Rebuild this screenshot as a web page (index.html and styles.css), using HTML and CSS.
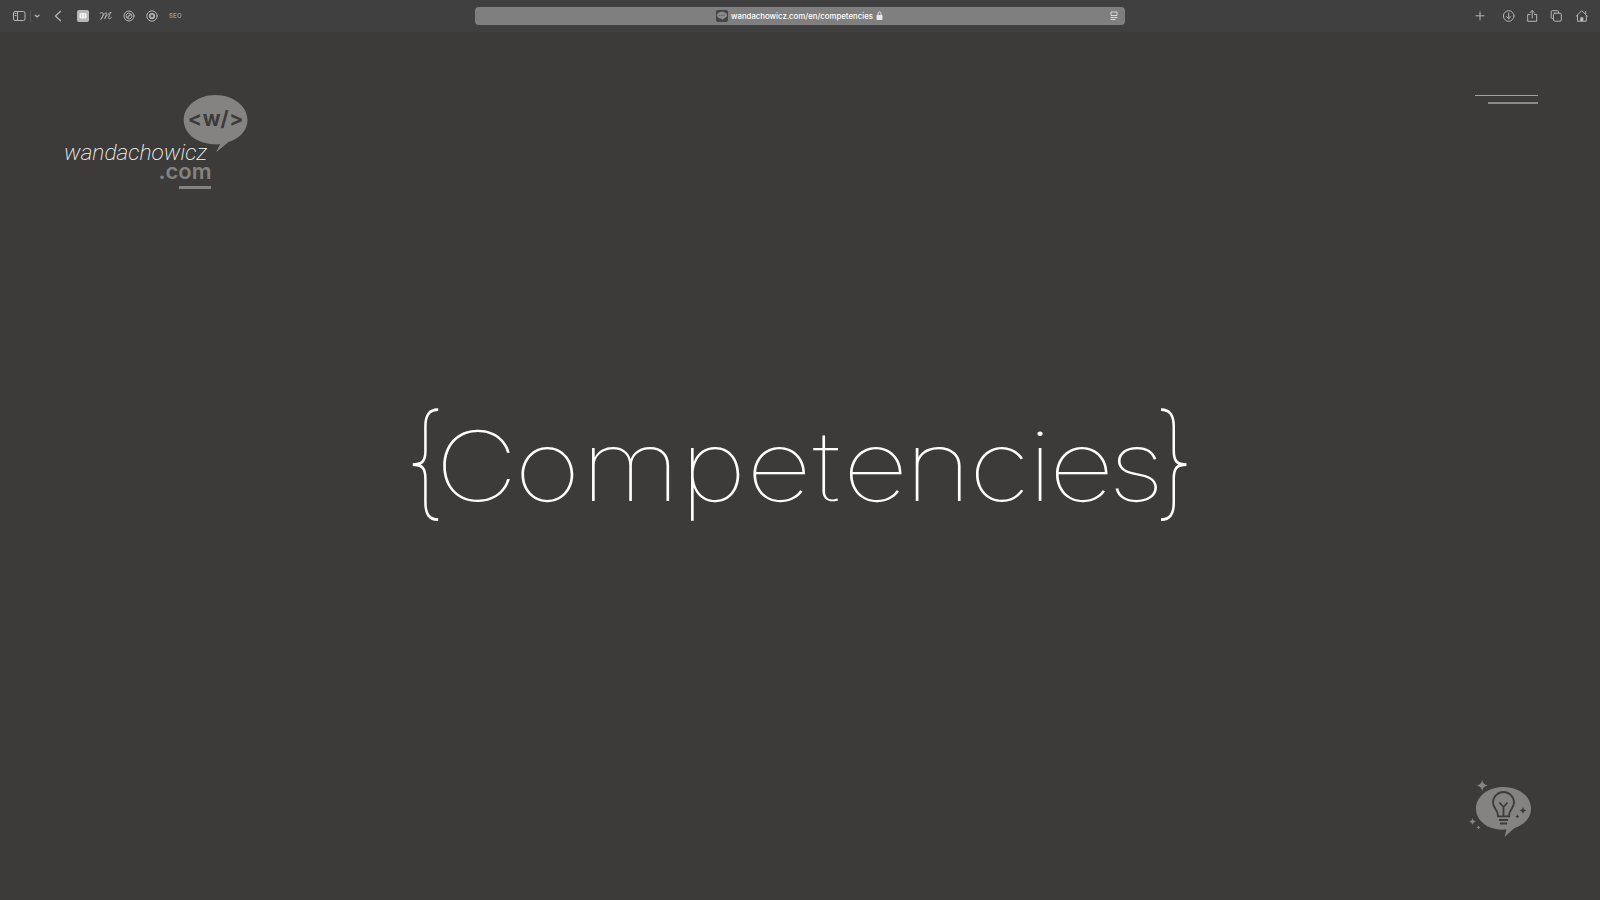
FILE: index.html
```html
<!DOCTYPE html>
<html lang="en">
<head>
<meta charset="utf-8">
<title>Competencies</title>
<link rel="stylesheet" href="styles.css">
</head>
<body>
<header class="toolbar">
  <svg class="tools" width="200" height="32" viewBox="0 0 200 32">
    <g class="line">
      <rect x="13.500" y="11.500" width="11.500" height="9" rx="1.500"/>
      <path d="M17.500 11.500v9M15 13.500h1M15 15.500h1"/>
      <path class="divider" d="M30.500 11v11"/>
      <path class="bold" d="M35.200 15.200l1.900 1.700 1.900-1.700"/>
      <path class="bold" d="M60.500 11.300L55.500 16l5 4.700"/>
      <circle cx="129" cy="16" r="5"/>
      <path d="M126.600 17.500a2.800 2.800 0 0 1 3.800-4zM131.400 14.500a2.800 2.800 0 0 1-3.800 4z"/>
      <circle cx="152" cy="16" r="5.200"/>
      <circle class="thick" cx="152" cy="16" r="2.200"/>
      <path d="M100 13.200c1.200-.8 3-.7 3.200.4.200 1.700-.9 4.200-2.400 5.900 1.400-2.900 3.500-6.300 5.300-6.800 1.200 0-.6 3.500-1.300 6 1.300-2.700 4.400-6 6.300-6.500-1.100 1.600-3.300 5.700-2.200 6.500.9.300 1.800-.7 2.500-1.300"/>
    </g>
    <rect x="77" y="10" width="12" height="12" rx="2" fill="#b8b8b8"/>
    <rect x="79.500" y="13" width="7" height="5.500" rx="1" fill="#f0f0f0"/>
    <path d="M81.500 14v3M84.500 14v3" stroke="#d6d6d6"/>
    <text class="seo" x="169" y="18.300" textLength="12.500">SEO</text>
  </svg>
  <div class="address">
    <svg class="favicon" width="12" height="12" viewBox="0 0 12 12">
      <rect width="12" height="12" rx="2" fill="#454545"/>
      <ellipse cx="6" cy="5.300" rx="5" ry="3.500" fill="#8b8b8b"/>
      <path d="M6 8l.2 2.200L8 8z" fill="#8b8b8b"/>
      <path d="M2.800 5.300h6.400" stroke="#5b5b5b" stroke-dasharray="1.500 .7"/>
    </svg>
    <span class="url">wandachowicz.com/en/competencies</span>
    <svg class="lock" width="7" height="10" viewBox="0 0 7 10">
      <rect x=".5" y="4" width="6" height="5" rx=".8" fill="#e8e8e8"/>
      <path d="M2 4V2.500a1.500 1.500 0 0 1 3 0V4" fill="none" stroke="#e8e8e8"/>
    </svg>
    <svg class="reader" width="8" height="10" viewBox="0 0 8 10">
      <path d="M1 1h6v3.500H1zM.5 6.500h7M.5 8.500h5" fill="none" stroke="#dadada"/>
    </svg>
  </div>
  <svg class="tools" width="150" height="32" viewBox="0 0 150 32">
    <g class="line">
      <path d="M30 11.800v8M26 15.800h8"/>
      <circle cx="58.700" cy="16" r="5.300"/>
      <path d="M58.700 13v5.500M56.500 16.500l2.200 2.200 2.200-2.200"/>
      <path d="M80 14.500h-2.300v6.800h9v-6.800h-2.300M82.200 18v-7.300M80 12.700l2.200-2.200 2.200 2.200"/>
      <path d="M103.500 18.500h-1.300q-1 0-1-1v-5.800q0-1 1-1h5.300q1 0 1 1V13"/>
      <rect x="103.500" y="13.200" width="7.800" height="8" rx="1.200"/>
      <path d="M126.200 16.200l5.600-5.500 5.600 5.500M127.500 15.500v5.700h8.800v-5.700M135.700 13.500v-2"/>
    </g>
    <path d="M130.300 21v-3.700h3V21z" fill="#c0c0c0"/>
  </svg>
</header>
<main class="page">
  <div class="top">
    <svg class="logo" width="190" height="98" viewBox="60 93 190 98" role="img">
      <path class="shape" d="M215.500 95C233 95 247.500 106 247.500 119.800C247.500 130.500 240 138.500 228.500 142L216 152.500L220 144.300C199 145.500 183.700 135 183.700 119.800C183.700 106 198 95 215.500 95Z"/>
      <text class="code" x="194.800 211.800 224.500 236.300" y="126">&lt;w/&gt;</text>
      <text class="name" x="64" y="160" textLength="143" lengthAdjust="spacingAndGlyphs">wandachowicz</text>
      <text class="com" x="158.500" y="179" textLength="53">.com</text>
      <rect class="shape" x="179" y="186" width="32" height="3"/>
    </svg>
    <div class="menu"><i class="bar"></i><i class="bar short"></i></div>
  </div>
  <h1 class="heading">
    <svg width="800" height="200" viewBox="400 360 800 200">
      <text class="brace" transform="translate(425 503.500) scale(1.080 1.240)">{</text>
      <text class="title" transform="translate(0 501) scale(1.180 1)" x="403.800 464 534.300 604.500 660.200 700.500 742 795 847 881.500 916.500 963">Competencies</text>
      <text class="brace" transform="translate(1174 503.500) scale(1.080 1.240)">}</text>
    </svg>
  </h1>
  <svg class="hint" width="66" height="60" viewBox="1468 778 66 60">
    <path class="shape" d="M1503.500 787C1519 787 1531 796.500 1531 808.500C1531 818 1524 825 1514.500 828L1504.500 837L1506.500 829.500C1489 831 1476 821.500 1476 808.500C1476 796.500 1488 787 1503.500 787Z"/>
    <path class="shape" d="M1482.200 780q.8 4.700 5.500 5.500q-4.700.8-5.500 5.500q-.8-4.700-5.500-5.500q4.700-.8 5.500-5.500zM1472.500 818q.5 3 3.500 3.500q-3 .5-3.500 3.500q-.5-3-3.500-3.500q3-.5 3.500-3.500zM1478.500 825.500q.3 1.700 2 2q-1.700.3-2 2q-.3-1.700-2-2q1.700-.3 2-2z"/>
    <path class="ink" d="M1498 815.500C1498 810 1493 808 1493 802.500A10.500 10.500 0 0 1 1514 802.500C1514 808 1509 810 1509 815.500M1499.500 802.500l4 4.500 4-4.500M1503.500 807v8.500M1497 816.300h13M1499 820h9M1500 823.500h7"/>
    <path class="cut" d="M1523 807q.5 3 3.500 3.500q-3 .5-3.500 3.500q-.5-3-3.500-3.500q3-.5 3.500-3.500zM1517.300 814.500q.3 1.700 2 2q-1.700.3-2 2q-.3-1.700-2-2q1.700-.3 2-2z"/>
  </svg>
</main>
</body>
</html>
```
FILE: styles.css
```css
* { box-sizing: border-box; }
body {
  margin: 0;
  width: 1600px;
  height: 900px;
  overflow: hidden;
  display: flex;
  flex-direction: column;
  background: #3c3b39;
  font-family: Inter, "Liberation Sans", sans-serif;
}
svg { display: block; flex: none; }
.toolbar {
  height: 32px;
  display: flex;
  align-items: center;
  background: #404040;
}
.line { fill: none; stroke: #b4b4b4; stroke-width: 1; stroke-linecap: round; stroke-linejoin: round; }
.line .bold { stroke-width: 1.3; }
.line .thick { stroke-width: 1.8; }
.line .divider { stroke: #555; }
.seo { font: 600 6px Inter, sans-serif; fill: #999; }
.address {
  width: 650px;
  height: 18px;
  margin: 0 325px 0 275px;
  flex: none;
  display: flex;
  align-items: center;
  border-radius: 4px;
  background: #7f7f7f;
  padding: 0 7px 0 241px;
}
.url {
  width: 142px;
  margin-left: 3px;
  font-size: 7.800px;
  font-weight: 500;
  line-height: 18px;
  white-space: nowrap;
  color: #fff;
}
.lock { margin-left: 3px; }
.reader { margin-left: auto; }
.page {
  flex: 1;
  display: flex;
  flex-direction: column;
  align-items: center;
  padding: 61px 62px 62px 60px;
}
.top { align-self: stretch; display: flex; justify-content: space-between; }
.menu {
  width: 63px;
  padding-top: 2px;
  display: flex;
  flex-direction: column;
  align-items: flex-end;
  gap: 6px;
}
.bar { width: 63px; height: 1px; background: #a3a29f; }
.short { width: 50px; height: 2px; background: #8a8987; }
.shape { fill: #848381; }
.code { font: 700 21px Inter, sans-serif; fill: #3c3b39; text-anchor: middle; }
.name { font: italic 200 21.5px Roboto, sans-serif; fill: #f5f5f3; }
.com { font: 600 22px Inter, sans-serif; fill: #848381; }
.heading { margin: 169px 0 0 2px; font-weight: 100; }
.title, .brace { font-family: Inter, sans-serif; font-weight: 100; fill: #fff; text-anchor: middle; }
.title { font-size: 97px; }
.brace { font-size: 100px; }
.hint { margin: auto 4px 0 0; align-self: flex-end; }
.ink { fill: none; stroke: #3c3b39; stroke-width: 1.8; }
.cut { fill: #3c3b39; }
```
